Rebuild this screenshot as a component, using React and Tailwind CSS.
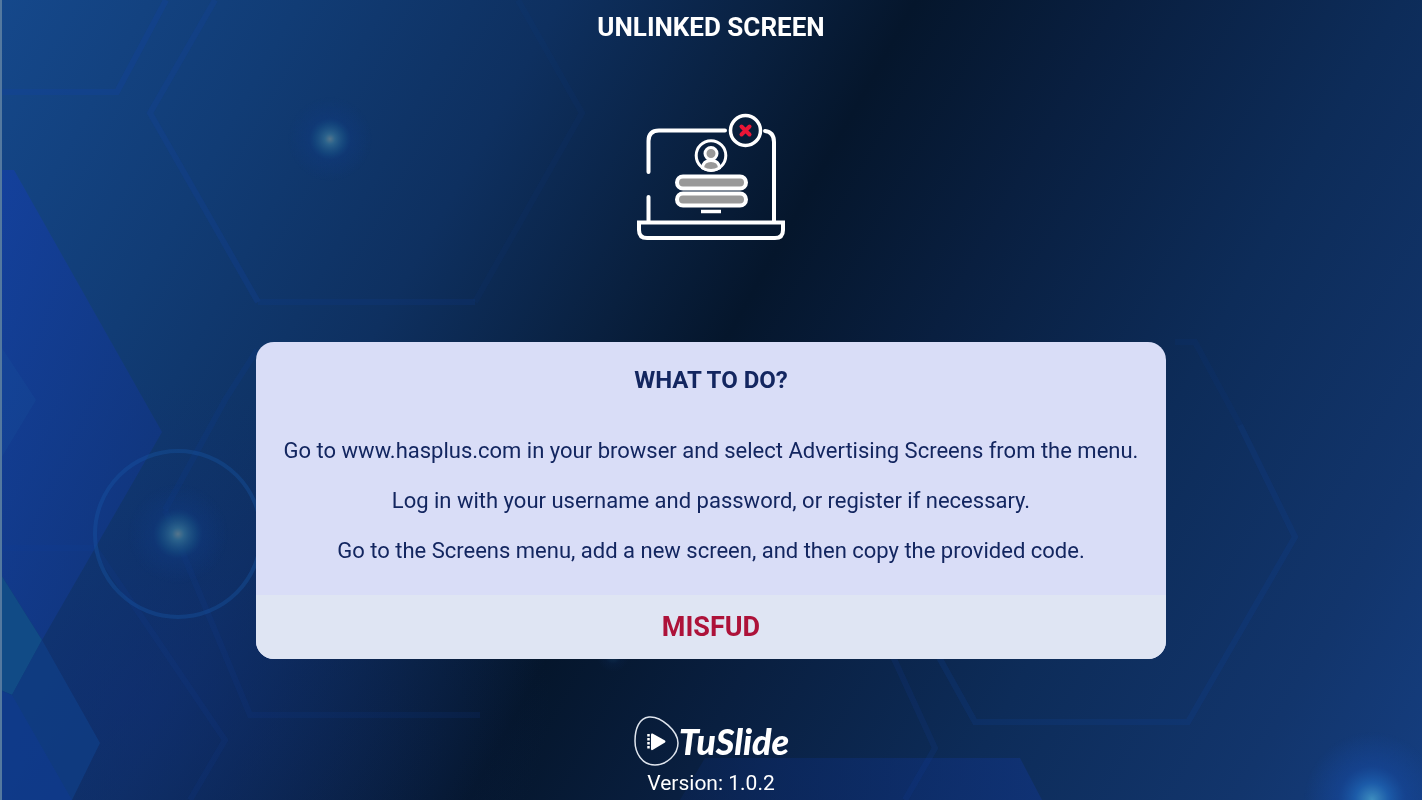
import React from "react";

const steps = [
  "Go to www.hasplus.com in your browser and select Advertising Screens from the menu.",
  "Log in with your username and password, or register if necessary.",
  "Go to the Screens menu, add a new screen, and then copy the provided code.",
];

function Backdrop() {
  return (
    <svg
      className="absolute inset-0 -z-10 h-full w-full"
      viewBox="0 0 1422 800"
      preserveAspectRatio="none"
      aria-hidden="true"
    >
      <defs>
        <linearGradient id="base" gradientUnits="userSpaceOnUse" x1="0" y1="0" x2="1423" y2="797">
          <stop offset="0" stopColor="#15488b" />
          <stop offset="0.16" stopColor="#113c75" />
          <stop offset="0.3" stopColor="#0e3060" />
          <stop offset="0.42" stopColor="#09203f" />
          <stop offset="0.49" stopColor="#05162c" />
          <stop offset="0.6" stopColor="#091f40" />
          <stop offset="0.75" stopColor="#0d2c59" />
          <stop offset="0.9" stopColor="#12356c" />
          <stop offset="1" stopColor="#153e80" />
        </linearGradient>
        <linearGradient id="shard" x1="0" y1="0" x2="1" y2="1">
          <stop offset="0" stopColor="#1440a0" />
          <stop offset="1" stopColor="#10347a" />
        </linearGradient>
        <linearGradient id="panel" x1="0" y1="0" x2="1" y2="0">
          <stop offset="0" stopColor="#0c2a68" stopOpacity="0.3" />
          <stop offset="0.3" stopColor="#0c2a68" stopOpacity="0.6" />
          <stop offset="1" stopColor="#10337a" stopOpacity="0.8" />
        </linearGradient>
        <radialGradient id="corner">
          <stop offset="0" stopColor="#102c78" stopOpacity="0.5" />
          <stop offset="1" stopColor="#102c78" stopOpacity="0" />
        </radialGradient>
        <radialGradient id="spark">
          <stop offset="0" stopColor="#55758c" />
          <stop offset="0.12" stopColor="#2c638c" />
          <stop offset="0.36" stopColor="#154a82" stopOpacity="0.7" />
          <stop offset="0.5" stopColor="#103a80" stopOpacity="0.4" />
          <stop offset="1" stopColor="#103a80" stopOpacity="0" />
        </radialGradient>
        <radialGradient id="flare">
          <stop offset="0" stopColor="#3f8fc0" />
          <stop offset="0.25" stopColor="#1d5fae" stopOpacity="0.9" />
          <stop offset="0.5" stopColor="#16479a" stopOpacity="0.6" />
          <stop offset="1" stopColor="#16479a" stopOpacity="0" />
        </radialGradient>
      </defs>
      <rect width="1422" height="800" fill="url(#base)" />
      <ellipse cx="130" cy="700" rx="420" ry="320" fill="url(#corner)" />

      {/* Filled shards on the left */}
      <path d="M0 170H14L162 432L42 640L0 573Z" fill="url(#shard)" opacity="0.85" />
      <path d="M0 345L36 400L0 460Z" fill="#16509a" opacity="0.3" />
      <path d="M0 573L42 640L12 695L0 690Z" fill="#114b86" />
      <path d="M42 640L100 743L72 800H0V690L12 695Z" fill="#103f88" opacity="0.7" />
      <path d="M12 695L72 800H0V690Z" fill="#1238a0" opacity="0.3" />
      <path d="M705 758H1020L1042 800H680Z" fill="url(#panel)" />

      {/* Hexagon outlines */}
      <g fill="none" stroke="#1444a0" strokeWidth="6" opacity="0.32">
        <path d="M166 0L117 92H0" />
        <path d="M215 0L150 113L258 302" opacity="0.8" />
        <path d="M258 302H475" opacity="0.45" />
        <path d="M475 302L582 113L518 0" opacity="0.25" />
        <path d="M257 350L225 400L165 510" opacity="0.45" />
        <path d="M165 510L250 715H480" opacity="0.4" />
        <path d="M0 548H95L225 740L190 800" opacity="0.4" />
        <path d="M1175 342H1195L1240 425" opacity="0.3" />
        <path d="M1240 425L1295 537L1188 722H975L935 650" opacity="0.6" />
        <path d="M890 650L935 748L905 800" opacity="0.5" />
      </g>
      <circle cx="178" cy="534" r="83" fill="none" stroke="#165aa8" strokeWidth="4" opacity="0.35" />

      <circle cx="330" cy="139" r="42" fill="url(#spark)" />
      <circle cx="178" cy="534" r="50" fill="url(#spark)" />
      <circle cx="613" cy="656" r="16" fill="url(#spark)" opacity="0.25" />
      <circle cx="1372" cy="800" r="68" fill="url(#flare)" />
      <rect width="2" height="800" fill="#54799f" />
    </svg>
  );
}

function LaptopIcon() {
  return (
    <svg
      className="h-[128px] w-[150px]"
      viewBox="0 0 150 128"
      fill="none"
      stroke="#fff"
      strokeWidth="4"
      strokeLinecap="round"
      aria-hidden="true"
    >
      {/* Lid and base */}
      <path d="M12.500 59V28Q12.500 17.500 23 17.500H89" />
      <path d="M12.500 84V108" />
      <path d="M129 18Q138 19 138 29V108" />
      <path d="M3 109.500H147V117Q147 125 139 125H11Q3 125 3 117Z" strokeLinecap="butt" />
      {/* Avatar */}
      <circle cx="75" cy="42.500" r="14.800" strokeWidth="3" />
      <path d="M66.500 55Q67 47.500 75 47.500T83.500 55Q75 60 66.500 55Z" fill="#999" strokeWidth="3" />
      <circle cx="75" cy="40.500" r="6" fill="#999" strokeWidth="3" />
      {/* Form fields */}
      <rect x="41" y="63.500" width="69" height="12" rx="6" fill="#999" />
      <rect x="41" y="80.500" width="69" height="12" rx="6" fill="#999" />
      <path d="M65 98.500H85" strokeWidth="3.500" strokeLinecap="butt" />
      {/* Error badge */}
      <circle cx="109.500" cy="17.500" r="15" strokeWidth="3.500" />
      <path d="M105.500 13.500L113.500 21.500M113.500 13.500L105.500 21.500" stroke="#ea1536" />
    </svg>
  );
}

function Logo() {
  return (
    <div className="flex h-[52px] items-center text-white">
      <svg className="h-[52px] w-[46px]" viewBox="0 0 46 52" aria-hidden="true">
        <path
          d="M16 2C28 1 45 16 45 28C45 40 33 50 22 50C9 50 2 38 2 26C2 14 6 3 16 2Z"
          fill="none"
          stroke="#dfe5ee"
          strokeWidth="1.500"
        />
        <path d="M18 19.500Q18 18 19.500 18.500L32 25.500Q33 26.500 32 27.500L19.500 35Q18 35.500 18 34Z" fill="#fff" />
        <path d="M15.500 19V35" stroke="#fff" strokeWidth="2.500" strokeDasharray="2.500 1.500" />
      </svg>
      <span className="font-[Lato,sans-serif] text-4xl leading-9 font-black italic">TuSlide</span>
    </div>
  );
}

function App() {
  return (
    <main className="relative isolate flex min-h-screen flex-col items-center overflow-hidden bg-[#05152b] font-[Roboto,sans-serif]">
      <Backdrop />

      <h1 className="mt-[9px] text-[26px] leading-9 font-bold text-white">UNLINKED SCREEN</h1>

      <div className="mt-[68px]">
        <LaptopIcon />
      </div>

      {/* Instructions */}
      <section className="mt-[101px] w-[64%] overflow-hidden rounded-[18px] bg-[#d9ddf7] text-center">
        <h2 className="mt-5 text-2xl leading-9 font-bold text-[#132660]">WHAT TO DO?</h2>
        <div className="mt-9 flex flex-col gap-4 pb-[27px] text-[22px] leading-[34px] text-[#132660]">
          {steps.map((step) => (
            <p key={step}>{step}</p>
          ))}
        </div>
        <div className="bg-[#dfe5f3] py-3">
          <p className="text-[27px] leading-10 font-bold text-[#ad1239]">MISFUD</p>
        </div>
      </section>

      <footer className="mt-14 flex flex-col items-center">
        <Logo />
        <p className="text-[21px] leading-8 text-white">Version: 1.0.2</p>
      </footer>
    </main>
  );
}

export default App;
